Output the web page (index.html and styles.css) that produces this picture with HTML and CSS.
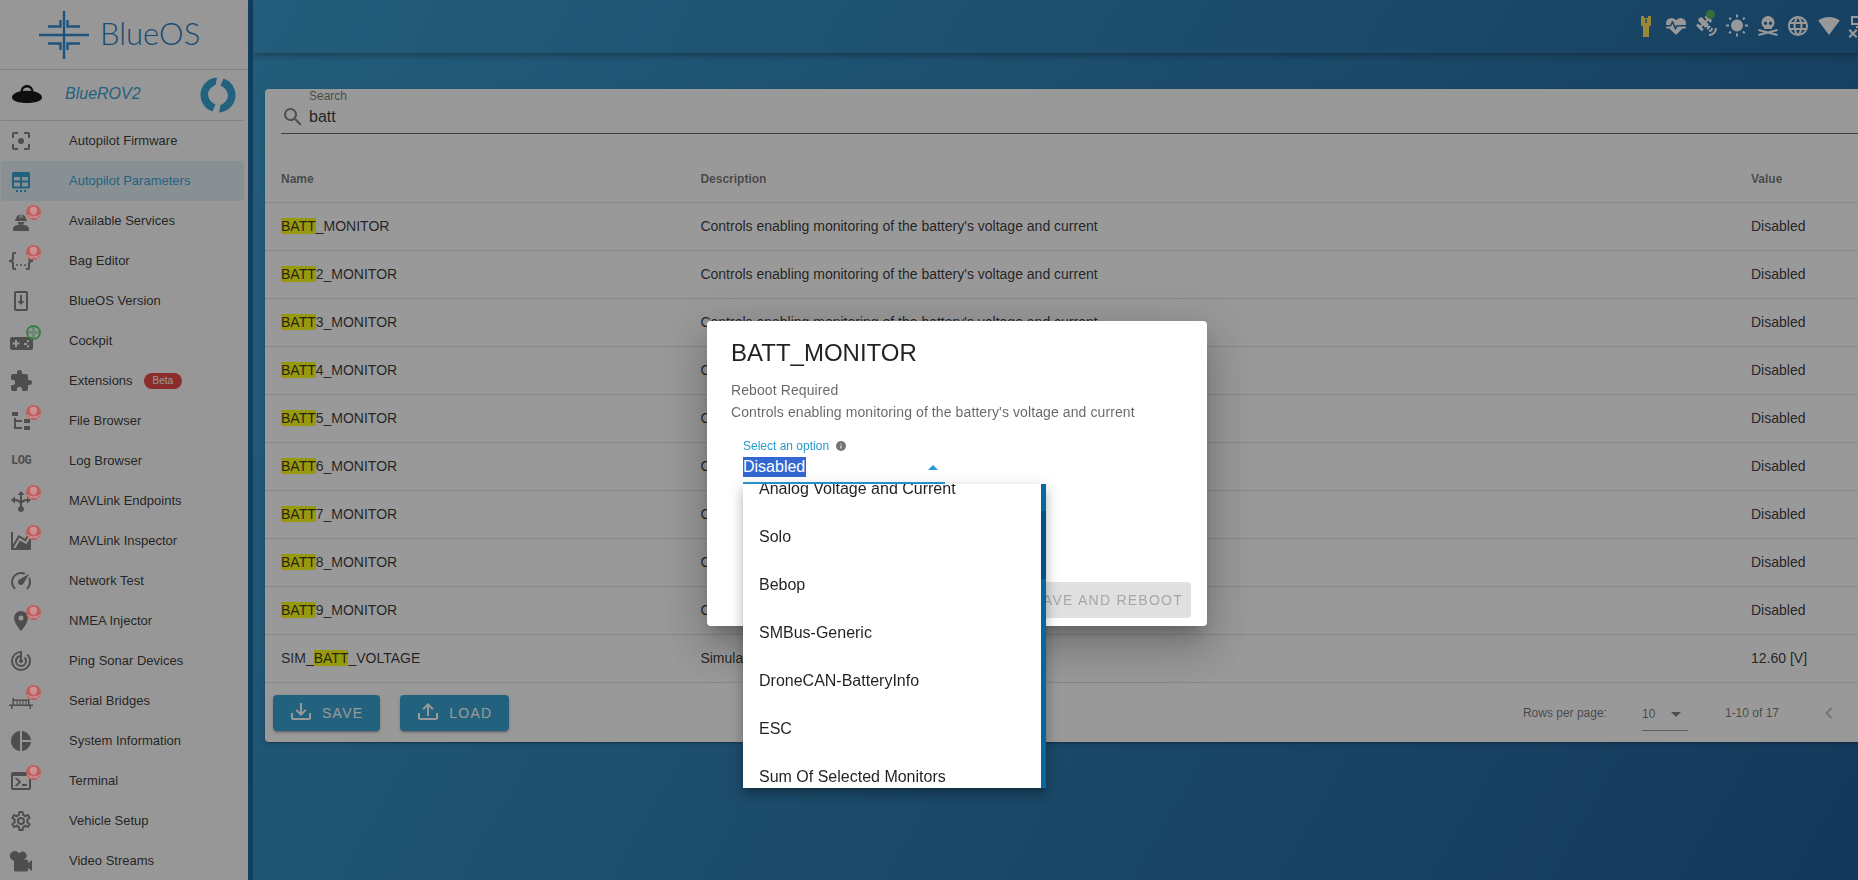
FILE: index.html
```html
<!DOCTYPE html>
<html lang="en">
<head>
  <meta charset="UTF-8">
  <title>BlueOS - Autopilot Parameters</title>
  <link rel="stylesheet" href="styles.css">
</head>
<body>
  <!-- shared icons -->
  <svg class="defs" width="0" height="0">
    <symbol id="badge-skull" viewBox="0 0 15 15">
      <circle cx="7.5" cy="7.5" r="7.5" fill="#bd5f5f"/>
      <path fill="#cf9090" d="M7.5 1.700a3.700 3.700 0 0 0-3.700 3.700c0 1.300.6 2.400 1.600 3v1.300h4.200V8.400c1-.6 1.600-1.700 1.600-3a3.700 3.700 0 0 0-3.700-3.700zM1.200 10l6.300 1.500L13.800 10l.3 1-4.400 1.100 3.800 1-1 .7-5-1.200-5 1.200-1-.7 3.800-1L.9 11z"/>
    </symbol>
    <symbol id="badge-plus" viewBox="0 0 15 15">
      <circle cx="7.5" cy="7.5" r="6.500" fill="none" stroke="#3f7f4a" stroke-width="2"/>
      <path fill="#3f7f4a" d="M6 2h3v4h4v3H9v4H6V9H2V6h4z" opacity=".5"/>
    </symbol>
  </svg>

  <div class="app">
    <aside class="sidebar">
      <div class="logo">
        <svg class="logo-mark" width="50" height="48" viewBox="0 0 50 48">
          <path d="M25 0v48M0 24h50M9 15.500h12.500V9M41 15.500H28.500V9M9 32.500h12.500V39M41 32.500H28.500V39" fill="none" stroke="#1a7fd0" stroke-width="2.400"/>
        </svg>
        <span class="logo-text">BlueOS</span>
      </div>
      <div class="vehicle">
        <svg class="vehicle-icon" width="30" height="18" viewBox="0 0 30 18">
          <path fill="#000" d="M15 0c-3.500 0-6 2.500-6.500 6.200C3.500 7.300 0 9.500 0 12.500 0 15.800 6.500 18 15 18s15-2.200 15-5.500c0-3-3.500-5.200-8.500-6.300C21 2.500 18.500 0 15 0zm0 2.500c2.300 0 4 1.700 4.300 3.500-1.400-.2-2.800-.3-4.300-.3s-2.900.1-4.300.3C11 4.200 12.700 2.500 15 2.500z"/>
        </svg>
        <span class="vehicle-name">BlueROV2</span>
        <svg class="vehicle-sync" width="36" height="36" viewBox="0 0 36 36">
          <path fill="#2699d0" d="M17 .5A17.500 17.500 0 0 0 12.500 34.600L15.500 27.500C11.500 25.500 8.500 22.500 8 18 8 13.500 11 10 15.500 8z"/>
          <path fill="#2699d0" d="M19 35.500A17.500 17.500 0 0 0 23.500 1.400L20.500 8.500C24.500 10.500 27.500 13.500 28 18 28 22.500 25 26 20.500 28z"/>
        </svg>
      </div>
      <nav class="nav">
        <a class="nav-item"><span class="nav-icon"><svg viewBox="0 0 24 24"><path d="M12,9A3,3 0 0,0 9,12A3,3 0 0,0 12,15A3,3 0 0,0 15,12A3,3 0 0,0 12,9M19,19H15V21H19A2,2 0 0,0 21,19V15H19M19,3H15V5H19V9H21V5A2,2 0 0,0 19,3M5,5H9V3H5A2,2 0 0,0 3,5V9H5M5,15H3V19A2,2 0 0,0 5,21H9V19H5V15Z"/></svg></span>Autopilot Firmware</a>
        <a class="nav-item active"><span class="nav-icon"><svg viewBox="0 0 24 24"><path d="M4.500 3h15A1.500 1.500 0 0 1 21 4.500V18a1.500 1.500 0 0 1-1.500 1.500h-15A1.500 1.500 0 0 1 3 18V4.500A1.500 1.500 0 0 1 4.500 3zM5 8v3.500h6V8zm8 0v3.500h6V8zM5 13.500V17.500h6v-4zm8 0v4h6v-4zM7 21h2v2H7zm4 0h2v2h-2zm4 0h2v2h-2z"/></svg></span>Autopilot Parameters</a>
        <a class="nav-item"><span class="nav-icon"><svg viewBox="0 0 24 24"><path d="M12 15.500c-4 0-8 1.600-8 4V22h16v-2.500c0-2.400-4-4-8-4zM7 10.500c0-2.400 1.600-4.300 3.500-4.900V9h1V5.400h1V9h1V5.600c1.900.6 3.500 2.500 3.500 4.900h1v1.500H6v-1.500zM8.300 13h7.400a3.900 3.900 0 0 1-7.400 0z"/></svg></span>Available Services<svg class="badge"><use href="#badge-skull"/></svg></a>
        <a class="nav-item"><span class="nav-icon"><svg viewBox="0 0 24 24"><path d="M5,3H7V5H5V10A2,2 0 0,1 3,12A2,2 0 0,1 5,14V19H7V21H5C3.93,20.73 3,20.1 3,19V15A2,2 0 0,0 1,13H0V11H1A2,2 0 0,0 3,9V5A2,2 0 0,1 5,3M19,3A2,2 0 0,1 21,5V9A2,2 0 0,0 23,11H24V13H23A2,2 0 0,0 21,15V19A2,2 0 0,1 19,21H17V19H19V14A2,2 0 0,1 21,12A2,2 0 0,1 19,10V5H17V3H19M12,15A1,1 0 0,1 13,16A1,1 0 0,1 12,17A1,1 0 0,1 11,16A1,1 0 0,1 12,15M8,15A1,1 0 0,1 9,16A1,1 0 0,1 8,17A1,1 0 0,1 7,16A1,1 0 0,1 8,15M16,15A1,1 0 0,1 17,16A1,1 0 0,1 16,17A1,1 0 0,1 15,16A1,1 0 0,1 16,15Z"/></svg></span>Bag Editor<svg class="badge"><use href="#badge-skull"/></svg></a>
        <a class="nav-item"><span class="nav-icon"><svg viewBox="0 0 24 24"><path d="M7 2h10a2 2 0 0 1 2 2v16a2 2 0 0 1-2 2H7a2 2 0 0 1-2-2V4a2 2 0 0 1 2-2zm0 2v16h10V4zm4 2h2v6h2.500L12 16l-3.500-4H11z"/></svg></span>BlueOS Version</a>
        <a class="nav-item"><span class="nav-icon"><svg viewBox="0 0 24 24"><path d="M3 8h19a2 2 0 0 1 2 2v9a2 2 0 0 1-2 2H3a2 2 0 0 1-2-2v-9a2 2 0 0 1 2-2zm3 3v2.500H3.500v2H6V18h2v-2.500h2.500v-2H8V11zm9 3v2h3v-2zm4-3a1.200 1.200 0 1 0 0 2.400 1.200 1.200 0 0 0 0-2.400zm0 5a1.200 1.200 0 1 0 0 2.400 1.200 1.200 0 0 0 0-2.400z"/></svg></span>Cockpit<svg class="badge"><use href="#badge-plus"/></svg></a>
        <a class="nav-item"><span class="nav-icon"><svg viewBox="0 0 24 24"><path d="M20.5,11H19V7C19,5.89 18.1,5 17,5H13V3.5A2.5,2.5 0 0,0 10.5,1A2.5,2.5 0 0,0 8,3.5V5H4A2,2 0 0,0 2,7V10.8H3.5C5,10.8 6.2,12 6.2,13.5C6.2,15 5,16.2 3.500,16.2H2V20A2,2 0 0,0 4,22H7.800V20.500C7.800,19 9,17.800 10.500,17.800C12,17.800 13.200,19 13.200,20.500V22H17A2,2 0 0,0 19,20V16H20.500A2.500,2.500 0 0,0 23,13.500A2.500,2.500 0 0,0 20.500,11Z"/></svg></span>Extensions<span class="beta">Beta</span></a>
        <a class="nav-item"><span class="nav-icon"><svg viewBox="0 0 24 24"><path d="M3,3H9V7H3V3M15,10H21V14H15V10M15,17H21V21H15V17M13,13H7V18H13V20H7L5,20V9H7V11H13V13Z"/></svg></span>File Browser<svg class="badge"><use href="#badge-skull"/></svg></a>
        <a class="nav-item"><span class="nav-icon log-icon">LOG</span>Log Browser</a>
        <a class="nav-item"><span class="nav-icon"><svg viewBox="0 0 24 24"><path d="M12 2l3.500 4H13v5.500c1.500-1 3-1.500 5-1.500V7.500l4 3.500-4 3.500V12c-2 0-3.500 1-5 2.500v2.700a3 3 0 1 1-2 0v-2.700C9.500 13 8 12 6 12v2.500L2 11l4-3.500V10c2 0 3.500.5 5 1.500V6H8.500z"/></svg></span>MAVLink Endpoints<svg class="badge"><use href="#badge-skull"/></svg></a>
        <a class="nav-item"><span class="nav-icon"><svg viewBox="0 0 24 24"><path d="M17.45,15.18L22,7.31V19L22,21H2V3H4V15.54L9.5,6L16,9.78L20.24,2.45L21.97,3.45L16.74,12.5L10.23,8.75L4.31,19H6.57L10.96,11.44L17.45,15.18Z"/></svg></span>MAVLink Inspector<svg class="badge"><use href="#badge-skull"/></svg></a>
        <a class="nav-item"><span class="nav-icon"><svg viewBox="0 0 24 24"><path d="M12,16A3,3 0 0,1 9,13C9,11.88 9.61,10.9 10.5,10.39L20.21,4.77L14.68,14.35C14.18,15.33 13.17,16 12,16M12,3C13.81,3 15.5,3.5 16.97,4.32L14.87,5.53C14,5.19 13,5 12,5A8,8 0 0,0 4,13C4,15.21 4.89,17.21 6.34,18.65H6.35C6.74,19.04 6.74,19.67 6.35,20.06C5.96,20.45 5.32,20.45 4.93,20.07V20.07C3.12,18.26 2,15.76 2,13A10,10 0 0,1 12,3M22,13C22,15.76 20.88,18.26 19.07,20.07V20.07C18.68,20.45 18.05,20.45 17.66,20.06C17.27,19.67 17.27,19.04 17.66,18.65V18.65C19.11,17.2 20,15.21 20,13C20,12 19.81,11 19.46,10.1L20.67,8C21.5,9.5 22,11.18 22,13Z"/></svg></span>Network Test</a>
        <a class="nav-item"><span class="nav-icon"><svg viewBox="0 0 24 24"><path d="M12,11.5A2.5,2.5 0 0,1 9.5,9A2.5,2.5 0 0,1 12,6.5A2.5,2.5 0 0,1 14.5,9A2.5,2.5 0 0,1 12,11.5M12,2A7,7 0 0,0 5,9C5,14.25 12,22 12,22C12,22 19,14.25 19,9A7,7 0 0,0 12,2Z"/></svg></span>NMEA Injector<svg class="badge"><use href="#badge-skull"/></svg></a>
        <a class="nav-item"><span class="nav-icon"><svg viewBox="0 0 24 24"><path d="M19.07,4.93L17.66,6.34C19.1,7.79 20,9.79 20,12A8,8 0 0,1 12,20A8,8 0 0,1 4,12C4,7.92 7.05,4.56 11,4.07V6.09C8.16,6.57 6,9.03 6,12A6,6 0 0,0 12,18A6,6 0 0,0 18,12C18,10.34 17.33,8.84 16.24,7.76L14.83,9.17C15.55,9.9 16,10.9 16,12A4,4 0 0,1 12,16A4,4 0 0,1 8,12C8,10.14 9.28,8.59 11,8.14V10.28C10.4,10.63 10,11.26 10,12A2,2 0 0,0 12,14A2,2 0 0,0 14,12C14,11.26 13.6,10.62 13,10.28V2H12A10,10 0 0,0 2,12A10,10 0 0,0 12,22A10,10 0 0,0 22,12C22,9.24 20.88,6.74 19.07,4.93Z"/></svg></span>Ping Sonar Devices</a>
        <a class="nav-item"><span class="nav-icon"><svg viewBox="0 0 24 24"><path d="M0 15.500h24v1.500H22v3h-1.500v-3h-17v3H2v-3H0zM3.500 9H5v6.500H3.500zM19 9h1.500v6.500H19zM5 10.500h14V12H5zM7.500 12h1v3.500h-1zm3 0h1v3.500h-1zm3 0h1v3.500h-1zm3 0h1v3.500h-1z"/></svg></span>Serial Bridges<svg class="badge"><use href="#badge-skull"/></svg></a>
        <a class="nav-item"><span class="nav-icon"><svg viewBox="0 0 24 24"><path d="M11,2V22C5.9,21.5 2,17.2 2,12C2,6.8 5.9,2.5 11,2M13,2V11H22C21.5,6.2 17.8,2.5 13,2M13,13V22C17.7,21.5 21.5,17.8 22,13H13Z"/></svg></span>System Information</a>
        <a class="nav-item"><span class="nav-icon"><svg viewBox="0 0 24 24"><path d="M20,19V7H4V19H20M20,3A2,2 0 0,1 22,5V19A2,2 0 0,1 20,21H4A2,2 0 0,1 2,19V5C2,3.89 2.9,3 4,3H20M13,17V15H18V17H13M9.58,13L5.57,9H8.4L11.7,12.3C12.09,12.69 12.09,13.33 11.7,13.72L8.42,17H5.59L9.58,13Z"/></svg></span>Terminal<svg class="badge"><use href="#badge-skull"/></svg></a>
        <a class="nav-item"><span class="nav-icon"><svg viewBox="0 0 24 24"><path d="M12,8A4,4 0 0,1 16,12A4,4 0 0,1 12,16A4,4 0 0,1 8,12A4,4 0 0,1 12,8M12,10A2,2 0 0,0 10,12A2,2 0 0,0 12,14A2,2 0 0,0 14,12A2,2 0 0,0 12,10M10,22C9.75,22 9.54,21.82 9.5,21.58L9.13,18.93C8.5,18.68 7.96,18.34 7.44,17.94L4.95,18.95C4.73,19.03 4.46,18.95 4.34,18.73L2.34,15.27C2.21,15.05 2.27,14.78 2.46,14.63L4.57,12.97L4.5,12L4.57,11L2.46,9.37C2.27,9.22 2.21,8.95 2.34,8.73L4.34,5.27C4.46,5.05 4.73,4.96 4.95,5.05L7.44,6.05C7.96,5.66 8.5,5.32 9.13,5.07L9.5,2.42C9.54,2.18 9.75,2 10,2H14C14.25,2 14.46,2.18 14.5,2.42L14.87,5.07C15.5,5.32 16.04,5.66 16.56,6.05L19.05,5.05C19.27,4.96 19.54,5.05 19.66,5.27L21.66,8.73C21.79,8.95 21.73,9.22 21.54,9.37L19.43,11L19.5,12L19.43,13L21.54,14.63C21.73,14.78 21.79,15.05 21.66,15.27L19.66,18.73C19.54,18.95 19.27,19.04 19.05,18.95L16.56,17.95C16.04,18.34 15.5,18.68 14.87,18.93L14.5,21.58C14.46,21.82 14.25,22 14,22H10M11.25,4L10.88,6.61C9.68,6.86 8.62,7.5 7.85,8.39L5.44,7.35L4.69,8.65L6.8,10.2C6.4,11.37 6.4,12.64 6.8,13.8L4.68,15.36L5.43,16.66L7.86,15.62C8.63,16.5 9.68,17.14 10.87,17.38L11.24,20H12.76L13.13,17.39C14.32,17.14 15.37,16.5 16.14,15.62L18.57,16.66L19.32,15.36L17.2,13.81C17.6,12.64 17.6,11.37 17.2,10.2L19.31,8.65L18.56,7.35L16.15,8.39C15.38,7.5 14.32,6.86 13.12,6.62L12.75,4H11.25Z"/></svg></span>Vehicle Setup</a>
        <a class="nav-item"><span class="nav-icon"><svg viewBox="0 0 24 24"><path d="M6.500 2a4 4 0 0 1 3.700 2.500A4 4 0 1 1 14.500 10.500H17.500A1.500 1.500 0 0 1 19 12v2l4-3v11l-4-3v2a1.500 1.500 0 0 1-1.500 1.500h-11A1.500 1.500 0 0 1 5 21v-9.300A4.800 4.800 0 0 1 6.500 2z"/></svg></span>Video Streams</a>
      </nav>
    </aside>

    <main class="main">
      <header class="topbar">
        <div class="status-icons">
          <svg viewBox="0 0 24 24" class="flashlight"><path d="M7 2h3v2h4V2h3v9l-2 2v10H9V13l-2-2zM11.300 5v4h1.400V5z"/></svg>
          <svg viewBox="0 0 24 24"><path d="M7.5,4A5.5,5.5 0 0,0 2,9.5C2,10 2.09,10.5 2.22,11H6.3L7.57,7.63C7.87,6.83 9.05,6.75 9.43,7.63L11.5,13L12.09,11.58C12.22,11.25 12.57,11 13,11H21.78C21.91,10.5 22,10 22,9.5A5.5,5.5 0 0,0 16.5,4C14.64,4 13,4.93 12,6.34C11,4.93 9.36,4 7.5,4V4M3,12.5A1,1 0 0,0 2,13.5A1,1 0 0,0 3,14.5H5.44L11,20C12,20.9 12,20.9 13,20L18.56,14.5H21A1,1 0 0,0 22,13.5A1,1 0 0,0 21,12.5H13.4L12.47,14.8C12.07,15.81 10.92,15.67 10.55,14.83L8.5,9.5L7.54,11.83C7.39,12.21 7.05,12.5 6.6,12.5H3Z"/></svg>
          <span class="satellite"><svg viewBox="0 0 24 24"><path d="M11.62,1L17.28,6.67L15.16,8.79L13.04,6.67L11.62,8.09L13.95,10.41L12.79,11.58L13.24,12.04C14.17,11.61 15.31,11.77 16.07,12.54L12.54,16.07C11.77,15.31 11.61,14.17 12.04,13.24L11.58,12.79L10.41,13.95L8.09,11.62L6.67,13.04L8.79,15.16L6.67,17.28L1,11.62L3.14,9.5L5.26,11.62L6.67,10.21L3.84,7.38C3.06,6.6 3.06,5.33 3.84,4.55L4.55,3.84C5.33,3.06 6.6,3.06 7.38,3.84L10.21,6.67L11.62,5.26L9.5,3.14L11.62,1M18,14A4,4 0 0,1 14,18V16A2,2 0 0,0 16,14H18M22,14A8,8 0 0,1 14,22V20A6,6 0 0,0 20,14H22Z"/></svg><i class="green-dot"></i></span>
          <svg viewBox="0 0 24 24"><path d="M3.55,18.54L4.96,19.95L6.76,18.16L5.34,16.74M11,22.45C11.32,22.45 13,22.45 13,22.45V19.5H11M12,5.5A6,6 0 0,0 6,11.5A6,6 0 0,0 12,17.5A6,6 0 0,0 18,11.5C18,8.18 15.31,5.5 12,5.5M20,12.5H23V10.5H20M17.24,18.16L19.04,19.95L20.45,18.54L18.66,16.74M20.45,4.46L19.04,3.05L17.24,4.84L18.66,6.26M13,0.55H11V3.5H13M4,10.5H1V12.5H4M6.76,4.84L4.96,3.05L3.55,4.46L5.34,6.26L6.76,4.84Z"/></svg>
          <svg viewBox="0 0 24 24"><path fill-rule="evenodd" d="M12 2a6.500 6.500 0 0 0-6.500 6.500c0 2 .9 3.700 2.500 4.900V15h8v-1.600c1.600-1.200 2.500-2.900 2.500-4.900A6.500 6.500 0 0 0 12 2zM9.500 7.500a1.700 1.700 0 1 1 0 3.400 1.700 1.700 0 0 1 0-3.400zm5 0a1.700 1.700 0 1 1 0 3.400 1.700 1.700 0 0 1 0-3.400zM2.700 15l9.300 2.500 9.300-2.500.5 1.900-6 1.600 6 1.600-.5 1.900-9.300-2.500-9.300 2.500-.5-1.900 6-1.600-6-1.600z"/></svg>
          <svg viewBox="0 0 24 24"><path d="M16.36,14C16.44,13.34 16.5,12.68 16.5,12C16.5,11.32 16.44,10.66 16.36,10H19.74C19.9,10.64 20,11.31 20,12C20,12.69 19.9,13.36 19.74,14M14.59,19.56C15.19,18.45 15.65,17.25 15.97,16H18.92C17.96,17.65 16.43,18.93 14.59,19.56M14.34,14H9.66C9.56,13.34 9.5,12.68 9.5,12C9.5,11.32 9.56,10.65 9.66,10H14.34C14.43,10.65 14.5,11.32 14.5,12C14.5,12.68 14.43,13.34 14.34,14M12,19.96C11.17,18.76 10.5,17.43 10.09,16H13.91C13.5,17.43 12.83,18.76 12,19.96M8,8H5.08C6.03,6.34 7.57,5.06 9.4,4.44C8.8,5.55 8.35,6.75 8,8M5.08,16H8C8.35,17.25 8.8,18.45 9.4,19.56C7.57,18.93 6.03,17.65 5.08,16M4.26,14C4.1,13.36 4,12.69 4,12C4,11.31 4.1,10.64 4.26,10H7.64C7.56,10.66 7.5,11.32 7.5,12C7.5,12.68 7.56,13.34 7.64,14M12,4.03C12.83,5.23 13.5,6.57 13.91,8H10.09C10.5,6.57 11.17,5.23 12,4.03M18.92,8H15.97C15.65,6.75 15.19,5.55 14.59,4.44C16.43,5.07 17.96,6.34 18.92,8M12,2C6.47,2 2,6.5 2,12A10,10 0 0,0 12,22A10,10 0 0,0 22,12A10,10 0 0,0 12,2Z"/></svg>
          <svg viewBox="0 0 24 24"><path d="M12,3C7.95,3 4.21,4.34 1.2,6.6L12,21L22.8,6.6C19.79,4.34 16.05,3 12,3Z"/></svg>
          <svg viewBox="0 0 24 24"><path d="M4 2h14v9H4zm2 2v5h10V4zM9 12h4v2H9zM3 15l3 3 3-3 1.500 1.500-3 3 3 3L9 24l-3-3-3 3-1.500-1.500 3-3-3-3z"/></svg>
        </div>
      </header>

      <section class="card">
        <div class="search">
          <svg class="search-icon" viewBox="0 0 24 24"><path d="M9.5,3A6.5,6.5 0 0,1 16,9.5C16,11.11 15.41,12.59 14.44,13.73L14.71,14H15.5L20.5,19L19,20.5L14,15.5V14.71L13.73,14.44C12.59,15.41 11.11,16 9.5,16A6.5,6.5 0 0,1 3,9.5A6.5,6.5 0 0,1 9.5,3M9.5,5C7,5 5,7 5,9.5C5,12 7,14 9.5,14C12,14 14,12 14,9.5C14,7 12,5 9.5,5Z"/></svg>
          <div class="search-field">
            <label class="search-label">Search</label>
            <div class="search-value">batt</div>
          </div>
        </div>

        <table class="params">
          <thead>
            <tr><th class="col-name">Name</th><th class="col-desc">Description</th><th>Value</th></tr>
          </thead>
          <tbody>
            <tr><td><mark>BATT</mark>_MONITOR</td><td>Controls enabling monitoring of the battery's voltage and current</td><td>Disabled</td></tr>
            <tr><td><mark>BATT</mark>2_MONITOR</td><td>Controls enabling monitoring of the battery's voltage and current</td><td>Disabled</td></tr>
            <tr><td><mark>BATT</mark>3_MONITOR</td><td>Controls enabling monitoring of the battery's voltage and current</td><td>Disabled</td></tr>
            <tr><td><mark>BATT</mark>4_MONITOR</td><td>Controls enabling monitoring of the battery's voltage and current</td><td>Disabled</td></tr>
            <tr><td><mark>BATT</mark>5_MONITOR</td><td>Controls enabling monitoring of the battery's voltage and current</td><td>Disabled</td></tr>
            <tr><td><mark>BATT</mark>6_MONITOR</td><td>Controls enabling monitoring of the battery's voltage and current</td><td>Disabled</td></tr>
            <tr><td><mark>BATT</mark>7_MONITOR</td><td>Controls enabling monitoring of the battery's voltage and current</td><td>Disabled</td></tr>
            <tr><td><mark>BATT</mark>8_MONITOR</td><td>Controls enabling monitoring of the battery's voltage and current</td><td>Disabled</td></tr>
            <tr><td><mark>BATT</mark>9_MONITOR</td><td>Controls enabling monitoring of the battery's voltage and current</td><td>Disabled</td></tr>
            <tr><td>SIM_<mark>BATT</mark>_VOLTAGE</td><td>Simulated battery voltage</td><td>12.60 [V]</td></tr>
          </tbody>
        </table>

        <div class="card-footer">
          <button class="btn-primary"><svg viewBox="0 0 24 24"><path d="M2 12H4V17H20V12H22V17C22 18.11 21.11 19 20 19H4C2.9 19 2 18.11 2 17V12M12 15L17.55 9.54L16.13 8.13L13 11.25V2H11V11.25L7.88 8.13L6.46 9.55L12 15Z"/></svg>SAVE</button>
          <button class="btn-primary"><svg viewBox="0 0 24 24"><path d="M2 12H4V17H20V12H22V17C22 18.11 21.11 19 20 19H4C2.9 19 2 18.11 2 17V12M12 2L6.46 7.46L7.88 8.88L11 5.75V15H13V5.75L16.13 8.88L17.55 7.45L12 2Z"/></svg>LOAD</button>
          <div class="pagination">
            <span>Rows per page:</span>
            <span class="rows-select">10<svg viewBox="0 0 24 24"><path d="M7,10L12,15L17,10H7Z"/></svg></span>
            <span class="range">1-10 of 17</span>
            <svg class="prev" viewBox="0 0 24 24"><path d="M15.41,16.58L10.83,12L15.41,7.41L14,6L8,12L14,18L15.41,16.58Z"/></svg>
          </div>
        </div>
      </section>
    </main>
  </div>

  <div class="overlay"></div>

  <div class="dialog">
    <h2 class="dialog-title">BATT_MONITOR</h2>
    <p class="dialog-text">Reboot Required</p>
    <p class="dialog-text">Controls enabling monitoring of the battery's voltage and current</p>
    <div class="select">
      <div class="select-label">Select an option<svg viewBox="0 0 24 24"><path d="M13,9H11V7H13M13,17H11V11H13M12,2A10,10 0 0,0 2,12A10,10 0 0,0 12,22A10,10 0 0,0 22,12A10,10 0 0,0 12,2Z"/></svg></div>
      <div class="select-row"><span class="select-value">Disabled</span><svg viewBox="0 0 24 24"><path d="M7,15L12,10L17,15H7Z"/></svg></div>
      <div class="menu">
        <ul class="menu-list">
          <li>Analog Voltage and Current</li>
          <li>Solo</li>
          <li>Bebop</li>
          <li>SMBus-Generic</li>
          <li>DroneCAN-BatteryInfo</li>
          <li>ESC</li>
          <li>Sum Of Selected Monitors</li>
        </ul>
        <div class="scrollbar"><div class="scrollbar-thumb"></div></div>
      </div>
    </div>
    <div class="dialog-actions">
      <button class="btn-disabled">SAVE AND REBOOT</button>
    </div>
  </div>
</body>
</html>
```

FILE: styles.css
```css
html, body {
  height: 100%;
  margin: 0;
  overflow: hidden;
}
body {
  font-family: 'Liberation Sans', Arial, sans-serif;
  color: rgba(0, 0, 0, 0.87);
  font-size: 14px;
}
.defs {
  position: absolute;
}
.app {
  display: flex;
  height: 880px;
  background: linear-gradient(120deg, #2899cf, #0a4d8c);
}

/* sidebar */
.sidebar {
  width: 248px;
  flex: none;
  background: #fbfbfb;
  border-right: 5px solid #075a96;
  overflow: hidden;
}
.logo {
  height: 69px;
  display: flex;
  align-items: center;
  padding-left: 39px;
  border-bottom: 1px solid #d4d4d4;
}
.logo-text {
  font-family: Lato, sans-serif;
  font-weight: 300;
  font-size: 31px;
  color: #1670b8;
  margin-left: 11px;
  margin-top: -4px;
}
.vehicle {
  height: 48px;
  padding-bottom: 2px;
  display: flex;
  align-items: center;
  padding-left: 12px;
}
.vehicle-name {
  font-style: italic;
  font-size: 16px;
  color: #2699d0;
  margin-left: 23px;
}
.vehicle-sync {
  margin-left: 59px;
  margin-top: 2px;
}
.nav {
  border-top: 1px solid #d4d4d4;
  margin: 0 4px 0 1px;
}
.nav-item {
  height: 40px;
  box-sizing: border-box;
  padding: 0 0 2px 8px;
  display: flex;
  align-items: center;
  border-radius: 4px;
  font-size: 13px;
  position: relative;
}
.nav-item.active {
  background: rgba(38, 153, 208, 0.12);
  color: #2699d0;
}
.nav-icon {
  width: 24px;
  height: 24px;
  margin: 2px 36px 0 0;
  flex: none;
  fill: #757575;
}
.nav-icon svg {
  display: block;
  width: 24px;
  height: 24px;
}
.active .nav-icon {
  fill: #2699d0;
}
.nav-item .badge {
  position: absolute;
  left: 25px;
  top: 4px;
  width: 15px;
  height: 15px;
  z-index: 1;
}
.log-icon {
  font-family: 'Liberation Mono', monospace;
  font-weight: bold;
  font-size: 12px;
  line-height: 24px;
  color: #757575;
  letter-spacing: -0.5px;
  padding-left: 2px;
  width: 22px;
}
.beta {
  background: #e53935;
  color: #fff;
  font-size: 10px;
  line-height: 16px;
  padding: 0 9px;
  border-radius: 8px;
  margin-left: 11px;
  margin-top: 2px;
}

/* top bar */
.main {
  flex: 1;
  min-width: 0;
}
.topbar {
  height: 53px;
  box-shadow: 0 2px 4px -1px rgba(0, 0, 0, 0.2), 0 4px 5px rgba(0, 0, 0, 0.14), 0 1px 10px rgba(0, 0, 0, 0.12);
  display: flex;
  justify-content: flex-end;
  align-items: center;
}
.status-icons {
  display: flex;
  gap: 6.5px;
  fill: #fff;
  margin-right: -13px;
  margin-top: -1px;
}
.status-icons svg {
  display: block;
  width: 24px;
  height: 24px;
}
.flashlight {
  fill: #ffe24a;
}
.satellite {
  position: relative;
}
.green-dot {
  position: absolute;
  left: 11px;
  top: -4px;
  width: 9px;
  height: 9px;
  border-radius: 50%;
  background: #4caf50;
}

/* parameter card */
.card {
  width: 1640px;
  margin: 36px 0 0 12px;
  background: #fff;
  border-radius: 4px;
  box-shadow: 0 3px 1px -2px rgba(0, 0, 0, 0.2), 0 2px 2px rgba(0, 0, 0, 0.14), 0 1px 5px rgba(0, 0, 0, 0.12);
}
.search {
  display: flex;
  margin: 0 16px;
  height: 44px;
  border-bottom: 1px solid rgba(0, 0, 0, 0.65);
  fill: #757575;
}
.search-icon {
  width: 24px;
  height: 24px;
  margin-top: 16px;
  margin-right: 4px;
  flex: none;
}
.search-label {
  display: block;
  font-size: 12px;
  line-height: 14px;
  color: rgba(0, 0, 0, 0.6);
}
.search-value {
  font-size: 16px;
  line-height: 24px;
  margin-top: 2px;
}
.params {
  border-collapse: collapse;
  table-layout: fixed;
  width: 100%;
  margin-top: 21px;
}
.params th {
  height: 47px;
  padding: 0 16px;
  text-align: left;
  font-size: 12px;
  color: rgba(0, 0, 0, 0.6);
  border-bottom: 1px solid rgba(0, 0, 0, 0.12);
}
.col-name {
  width: 387.4px;
}
.col-desc {
  width: 1018.6px;
}
.params td {
  height: 46px;
  padding: 0 16px 1px;
  border-bottom: 1px solid rgba(0, 0, 0, 0.12);
}
mark {
  background: #ffff00;
  color: inherit;
}
.card-footer {
  display: flex;
  align-items: center;
  padding: 12px 0 11px 8px;
  gap: 20px;
}
.btn-primary {
  height: 36px;
  display: flex;
  align-items: center;
  border: none;
  border-radius: 4px;
  background: #2699d0;
  color: #fff;
  fill: #fff;
  font: inherit;
  letter-spacing: 1.25px;
  padding: 0 17px 0 16px;
  box-shadow: 0 3px 1px -2px rgba(0, 0, 0, 0.2), 0 2px 2px rgba(0, 0, 0, 0.14), 0 1px 5px rgba(0, 0, 0, 0.12);
}
.btn-primary svg {
  width: 24px;
  height: 24px;
  margin-right: 9px;
}
.pagination {
  margin-left: auto;
  display: flex;
  align-items: center;
  font-size: 12px;
  padding-right: 64px;
  color: rgba(0, 0, 0, 0.6);
}
.rows-select {
  width: 46px;
  height: 34px;
  margin-left: 35px;
  display: flex;
  align-items: center;
  justify-content: space-between;
  box-sizing: border-box;
  border-bottom: 1px solid rgba(0, 0, 0, 0.42);
  fill: #757575;
  margin-top: 2px;
}
.rows-select svg {
  width: 24px;
  height: 24px;
}
.range {
  margin-left: 37px;
}
.prev {
  width: 24px;
  height: 24px;
  margin-left: 38px;
  fill: rgba(0, 0, 0, 0.26);
}

/* dialog */
.overlay {
  position: fixed;
  inset: 0;
  background: rgba(33, 33, 33, 0.46);
}
.dialog {
  position: fixed;
  z-index: 2;
  left: 707px;
  top: 321px;
  width: 500px;
  height: 305px;
  box-sizing: border-box;
  padding: 16px 16px 8px 24px;
  display: flex;
  flex-direction: column;
  background: #fff;
  border-radius: 4px;
  box-shadow: 0 11px 15px -7px rgba(0, 0, 0, 0.2), 0 24px 38px 3px rgba(0, 0, 0, 0.14), 0 9px 46px 8px rgba(0, 0, 0, 0.12);
}
.dialog-title {
  margin: 0 0 10px;
  font-size: 24px;
  font-weight: normal;
  line-height: 32px;
}
.dialog-text {
  margin: 0;
  line-height: 22px;
  letter-spacing: 0.1px;
  color: rgba(0, 0, 0, 0.6);
}
.select {
  position: relative;
  width: 202px;
  margin: 16px 0 0 12px;
  height: 43px;
  border-bottom: 2px solid #2699d0;
}
.select-label {
  display: flex;
  align-items: center;
  font-size: 12px;
  line-height: 14px;
  color: #2699d0;
}
.select-label svg {
  width: 12px;
  height: 12px;
  margin-left: 6px;
  fill: #757575;
}
.select-row {
  display: flex;
  align-items: center;
  justify-content: space-between;
  margin-top: 4px;
  height: 20px;
  fill: #2699d0;
}
.select-row svg {
  width: 24px;
  height: 24px;
}
.select-value {
  background: #3367d1;
  color: #fff;
  font-size: 16px;
  line-height: 20px;
  padding-right: 1px;
}
.menu {
  position: absolute;
  left: 0;
  top: 45px;
  width: 303px;
  height: 304px;
  display: flex;
  background: #fff;
  overflow: hidden;
  box-shadow: 0 5px 5px -3px rgba(0, 0, 0, 0.2), 0 8px 10px 1px rgba(0, 0, 0, 0.14), 0 3px 14px 2px rgba(0, 0, 0, 0.12);
}
.menu-list {
  flex: 1;
  list-style: none;
  margin: -19px 0 0;
  padding: 0;
  font-size: 16px;
}
.menu-list li {
  height: 48px;
  line-height: 48px;
  padding-left: 16px;
}
.scrollbar {
  width: 5px;
  background: #05699f;
}
.scrollbar-thumb {
  height: 68px;
  margin-top: 27px;
  background: #035286;
}
.dialog-actions {
  margin-top: auto;
  display: flex;
  justify-content: flex-end;
}
.btn-disabled {
  height: 36px;
  border: none;
  border-radius: 4px;
  background: #e0e0e0;
  color: #a6a6a6;
  font: inherit;
  letter-spacing: 1.25px;
  padding: 0 8px;
}
```
